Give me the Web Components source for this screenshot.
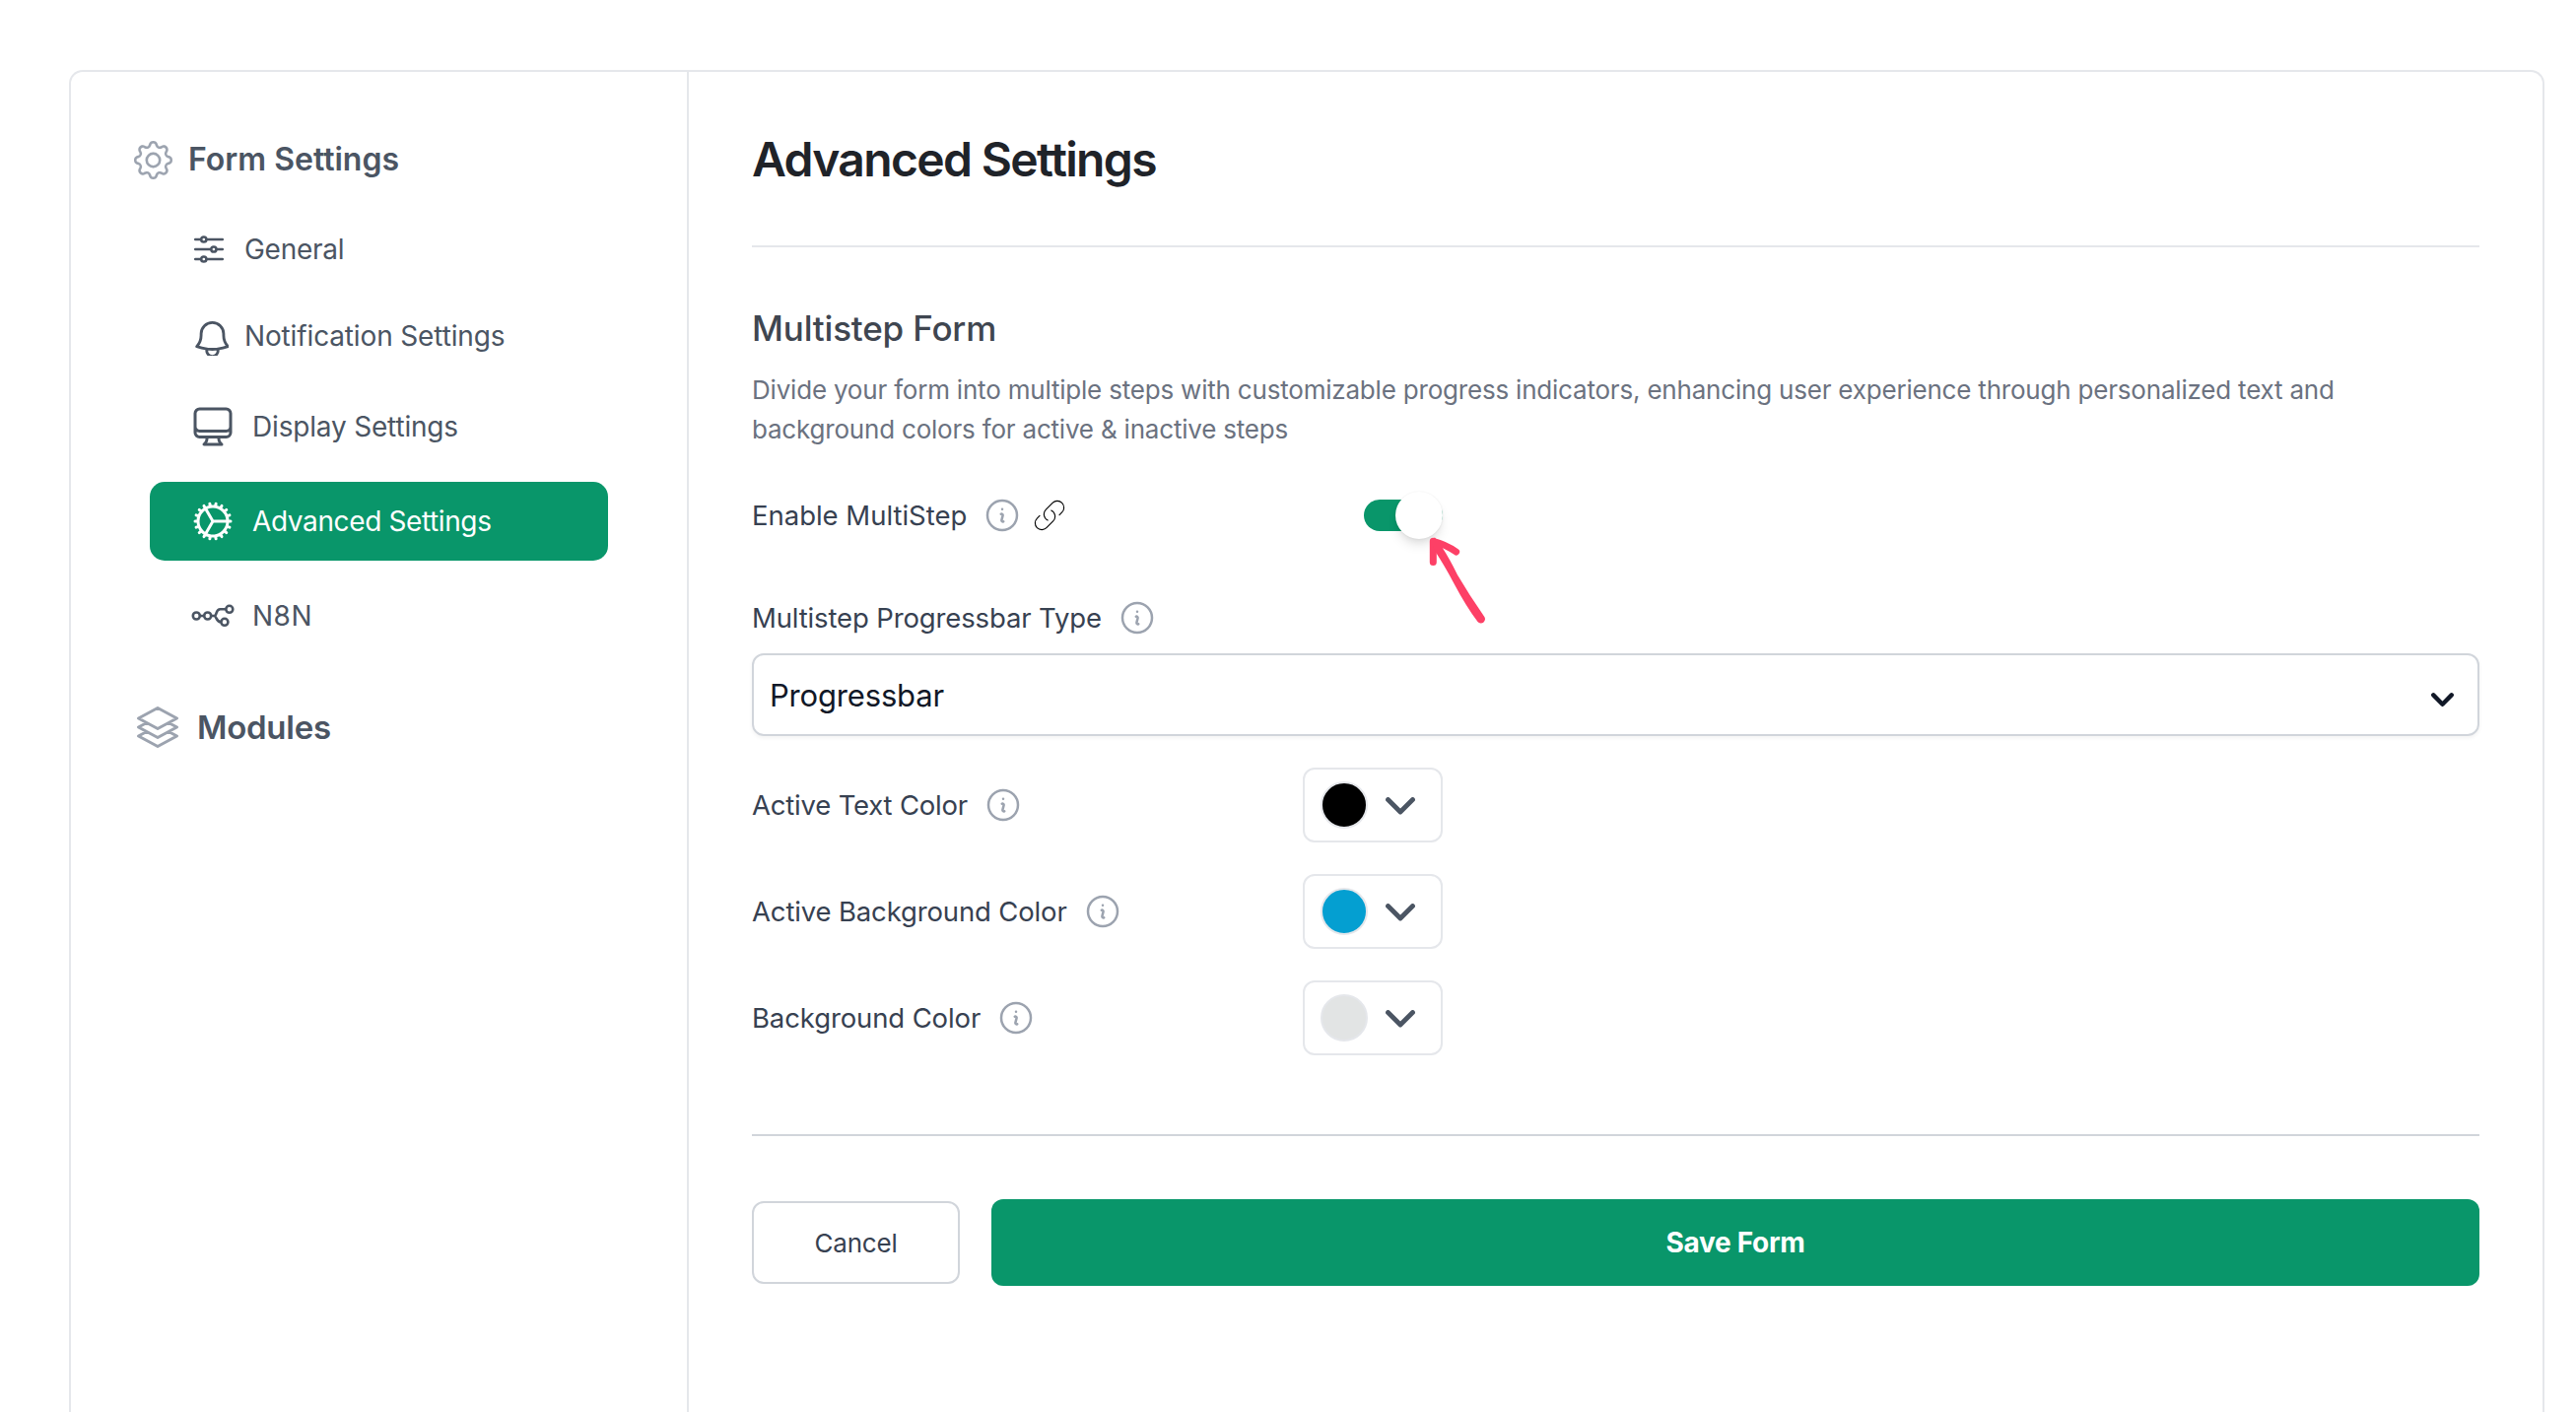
<!DOCTYPE html>
<html lang="en">
<head>
<meta charset="utf-8">
<title>Advanced Settings</title>
<style>
    html, body {
        margin: 0;
        height: 100%;
        overflow: hidden;
        background: #fff;
        font-family: Inter, "Liberation Sans", sans-serif;
        --green: #09966a;
        --line: #e5e7eb;
        --line-dark: #d1d5db;
    }
</style>
</head>
<body>
<settings-panel>
    <settings-sidebar slot="sidebar">
        <nav-heading icon="gear" style="--gap: 16px">Form Settings</nav-heading>
        <nav-list>
            <nav-item icon="sliders" compact style="letter-spacing: -0.28px">General</nav-item>
            <nav-item icon="bell" compact style="letter-spacing: -0.14px">Notification Settings</nav-item>
            <nav-item icon="desktop" style="letter-spacing: -0.18px">Display Settings</nav-item>
            <nav-item icon="cog" active style="letter-spacing: -0.38px">Advanced Settings</nav-item>
            <nav-item icon="nodes" style="letter-spacing: 0.5px">N8N</nav-item>
        </nav-list>
        <nav-heading icon="stack" style="--gap: 16px; font-size: 33px; letter-spacing: -0.25px">Modules</nav-heading>
    </settings-sidebar>

    <settings-section heading="Advanced Settings">
        <form-intro heading="Multistep Form">Divide your form into multiple steps with customizable progress indicators, enhancing user experience through personalized text and background colors for active &amp; inactive steps</form-intro>
        <form-row link style="--top: 43px; letter-spacing: -0.02px" label="Enable MultiStep"><toggle-switch></toggle-switch></form-row>
        <form-row style="--top: 56px; letter-spacing: -0.14px" label="Multistep Progressbar Type"></form-row>
        <select-box>Progressbar</select-box>
        <form-row style="--top: 32px; letter-spacing: -0.2px" label="Active Text Color"><color-picker color="#000000"></color-picker></form-row>
        <form-row style="--top: 32px; letter-spacing: -0.15px" label="Active Background Color"><color-picker color="#049fd1"></color-picker></form-row>
        <form-row style="--top: 32px; letter-spacing: -0.12px" label="Background Color"><color-picker color="#e2e4e4"></color-picker></form-row>
        <form-footer></form-footer>
    </settings-section>
</settings-panel>
<pointer-arrow></pointer-arrow>

<script>
(function () {
    const icons = {
        gear: `<svg width="39" height="39" viewBox="0 0 16 16" fill="currentColor" stroke="currentColor" stroke-width=".08"><path d="M8 4.754a3.246 3.246 0 1 0 0 6.492 3.246 3.246 0 0 0 0-6.492M5.754 8a2.246 2.246 0 1 1 4.492 0 2.246 2.246 0 0 1-4.492 0"/><path d="M9.796 1.343c-.527-1.79-3.065-1.79-3.592 0l-.094.319a.873.873 0 0 1-1.255.52l-.292-.16c-1.64-.892-3.433.902-2.54 2.541l.159.292a.873.873 0 0 1-.52 1.255l-.319.094c-1.79.527-1.79 3.065 0 3.592l.319.094a.873.873 0 0 1 .52 1.255l-.16.292c-.892 1.64.901 3.434 2.541 2.54l.292-.159a.873.873 0 0 1 1.255.52l.094.319c.527 1.79 3.065 1.79 3.592 0l.094-.319a.873.873 0 0 1 1.255-.52l.292.16c1.64.893 3.434-.902 2.54-2.541l-.159-.292a.873.873 0 0 1 .52-1.255l.319-.094c1.79-.527 1.79-3.065 0-3.592l-.319-.094a.873.873 0 0 1-.52-1.255l.16-.292c.893-1.64-.902-3.433-2.541-2.54l-.292.159a.873.873 0 0 1-1.255-.52zm-2.633.283c.246-.835 1.428-.835 1.674 0l.094.319a1.873 1.873 0 0 0 2.693 1.115l.291-.16c.764-.415 1.6.42 1.184 1.185l-.159.292a1.873 1.873 0 0 0 1.116 2.692l.318.094c.835.246.835 1.428 0 1.674l-.319.094a1.873 1.873 0 0 0-1.115 2.693l.16.291c.415.764-.42 1.6-1.185 1.184l-.291-.159a1.873 1.873 0 0 0-2.693 1.116l-.094.318c-.246.835-1.428.835-1.674 0l-.094-.319a1.873 1.873 0 0 0-2.692-1.115l-.292.16c-.764.415-1.6-.42-1.184-1.185l.159-.291A1.873 1.873 0 0 0 1.945 8.93l-.319-.094c-.835-.246-.835-1.428 0-1.674l.319-.094A1.873 1.873 0 0 0 3.06 4.377l-.16-.292c-.415-.764.42-1.6 1.185-1.184l.292.159a1.873 1.873 0 0 0 2.692-1.115z"/></svg>`,
        stack: `<svg width="48" height="48" viewBox="0 0 24 24" fill="none" stroke="currentColor" stroke-width="1.5" stroke-linecap="round" stroke-linejoin="round"><path d="M6.429 9.75L2.25 12l4.179 2.25m0-4.5l5.571 3 5.571-3m-11.142 0L2.25 7.5 12 2.25l9.75 5.25-4.179 2.25m0 0L21.75 12l-4.179 2.25m0 0l4.179 2.25L12 21.75 2.25 16.5l4.179-2.25m11.142 0l-5.571 3-5.571-3"/></svg>`,
        sliders: `<svg width="38" height="48" viewBox="0 0 38 48" fill="none" stroke="currentColor" stroke-width="2.5" stroke-linecap="round"><path d="M4.2 14H10M15.6 14H31.8M4.2 24H20M25.7 24H31.8M4.2 34H10M15.6 34H31.8"/><circle cx="12.8" cy="14" r="2.6"/><circle cx="22.9" cy="24" r="2.6"/><circle cx="12.8" cy="34" r="2.6"/></svg>`,
        bell: `<svg width="38" height="48" viewBox="0 0 38 48"><svg width="46" height="44"><path transform="translate(-1.3 4.7) scale(1.9)" fill="none" stroke="currentColor" stroke-width="1.5" stroke-linecap="round" stroke-linejoin="round" d="M14.857 17.082a23.848 23.848 0 005.454-1.31A8.967 8.967 0 0118 9.75v-.7V9A6 6 0 006 9v.75a8.967 8.967 0 01-2.312 6.022c1.733.64 3.56 1.085 5.455 1.31m5.714 0a24.255 24.255 0 01-5.714 0m5.714 0a3 3 0 11-5.714 0"/></svg></svg>`,
        desktop: `<svg width="46" height="48" viewBox="1 0 23 24" fill="none" stroke="currentColor" stroke-width="1.5" stroke-linecap="round" stroke-linejoin="round"><path d="M9 17.25v1.007a3 3 0 01-.879 2.122L7.5 21h9l-.621-.621A3 3 0 0115 18.257V17.25m6-12V15a2.25 2.25 0 01-2.25 2.25H5.25A2.25 2.25 0 013 15V5.25m18 0A2.25 2.25 0 0018.75 3H5.25A2.25 2.25 0 003 5.25m18 0V12a2.25 2.25 0 01-2.25 2.25H5.25A2.25 2.25 0 013 12V5.25"/></svg>`,
        cog: `<svg width="46" height="48" viewBox="1 0 23 24" fill="none" stroke="currentColor" stroke-width="1.5" stroke-linecap="round" stroke-linejoin="round"><path d="M4.5 12a7.5 7.5 0 0015 0m-15 0a7.5 7.5 0 1115 0m-15 0H3m16.5 0H21m-1.5 0H12m-8.457 3.077l1.41-.513m14.095-5.13l1.41-.513M5.106 17.785l1.15-.964m11.49-9.642l1.149-.964M7.501 19.795l.75-1.3m7.5-12.99l.75-1.3m-6.063 16.658l.26-1.477m2.605-14.772l.26-1.477m0 17.726l-.26-1.477M10.698 4.614l-.26-1.477M16.5 19.794l-.75-1.299M7.5 4.205L12 12m6.894 5.785l-1.149-.964M6.256 7.178l-1.15-.964m15.352 8.864l-1.41-.513M4.954 9.435l-1.41-.514M12.002 12l-3.75 6.495"/></svg>`,
        nodes: `<svg width="46" height="48" viewBox="0 0 46 48" fill="none" stroke="currentColor" stroke-width="2.6"><circle cx="5.3" cy="24" r="3.5"/><circle cx="16.7" cy="24" r="3.5"/><circle cx="38.8" cy="17.3" r="3.5"/><circle cx="33.9" cy="30.3" r="3.5"/><path d="M8.8 24H13.2M20.2 24H23.3C26.6 24 24.4 17.3 29.5 17.3H35.3M23.3 24C26 24 25 30.3 30.4 30.3"/></svg>`,
        info: `<svg width="40" height="40" viewBox="0 0 24 24" fill="none" stroke="#9ca3af" stroke-width="1.5" stroke-linecap="round" stroke-linejoin="round"><path d="M11.25 11.25l.041-.02a.75.75 0 011.063.852l-.708 2.836a.75.75 0 001.063.853l.041-.021M21 12a9 9 0 11-18 0 9 9 0 0118 0zm-9-3.75h.008v.008H12V8.25z"/></svg>`,
        link: `<svg width="36" height="36" viewBox="0 0 24 24" fill="none" stroke="#000" stroke-width=".75" stroke-linecap="round" stroke-linejoin="round"><path d="M13.19 8.688a4.5 4.5 0 011.242 7.244l-4.5 4.5a4.5 4.5 0 01-6.364-6.364l1.757-1.757m13.35-.622l1.757-1.757a4.5 4.5 0 00-6.364-6.364l-4.5 4.5a4.5 4.5 0 001.242 7.244"/></svg>`
    };

    // Registers an element whose shadow root is rendered once from its attributes.
    function define(name, render) {
        customElements.define(name, class extends HTMLElement {
            constructor() {
                super();
                this._shadowRoot = this.attachShadow({ mode: "open" });
            }
            connectedCallback() {
                this._shadowRoot.innerHTML = render(this);
            }
        });
    }

    define("settings-panel", () => `
    <style>
    :host { display: block; height: 100%; box-sizing: border-box; padding: 71px 32px 0 70px; }
    .panel { display: flex; height: 100%; box-sizing: border-box; border: 2px solid var(--line);
        border-bottom: 0; border-radius: 14px 14px 0 0; }
    </style>
    <div class="panel"><slot name="sidebar"></slot><slot></slot></div>
    `);

    define("settings-sidebar", () => `
    <style>
    :host { display: flex; flex-direction: column; flex: none; width: 627px; box-sizing: border-box;
        padding: 65px 80px 0 64px; border-right: 2px solid var(--line); color: #4b5563; }
    </style>
    <slot></slot>
    `);

    define("nav-heading", el => `
    <style>
    :host { display: flex; align-items: center; gap: var(--gap); height: 48px; font-size: 32px;
        line-height: 48px; font-weight: 630; }
    svg { display: block; color: #9ca3af; }
    </style>
    ${icons[el.getAttribute("icon")]}<span><slot></slot></span>
    `);

    define("nav-list", () => `
    <style>
    :host { display: flex; flex-direction: column; gap: 16px; margin: 31px 0 49px 16px; }
    </style>
    <slot></slot>
    `);

    define("nav-item", el => `
    <style>
    :host { display: flex; align-items: center; gap: 16px; height: 80px; box-sizing: border-box;
        padding-left: 42px; border-radius: 15px; font-size: 28px; line-height: 40px; }
    :host([compact]) { height: 72px; }
    :host([active]) { background: var(--green); color: #fff; }
    svg { display: block; }
    </style>
    ${icons[el.getAttribute("icon")]}<span><slot></slot></span>
    `);

    define("settings-section", el => `
    <style>
    :host { display: flex; flex-direction: column; flex: 1; padding: 61px 64px 0; }
    h1 { margin: 0; height: 56px; font-size: 48px; line-height: 56px; font-weight: 630;
        letter-spacing: -1.65px; color: #1f2329; }
    hr { width: 100%; height: 2px; margin: 59px 0 0; border: 0; background: var(--line); }
    </style>
    <h1>${el.getAttribute("heading")}</h1>
    <hr>
    <slot></slot>
    `);

    define("form-intro", el => `
    <style>
    :host { display: block; margin-top: 62px; }
    h2 { margin: 0; font-size: 35px; line-height: 40px; font-weight: 500; letter-spacing: -0.18px;
        color: #3f4650; }
    p { margin: 23px 0 0; max-width: 1680px; font-size: 26px; line-height: 40px;
        letter-spacing: -0.2px; color: #6b7280; }
    </style>
    <h2>${el.getAttribute("heading")}</h2>
    <p><slot></slot></p>
    `);

    define("form-row", el => `
    <style>
    :host { display: grid; grid-template-columns: 559px 142px; align-items: center; min-height: 48px;
        margin-top: var(--top); font-size: 27.5px; color: #374151; }
    .label { display: flex; align-items: center; line-height: 40px; }
    .label svg { margin-left: 16px; }
    .label svg + svg { margin-left: 10px; }
    .control { display: flex; justify-content: flex-end; }
    </style>
    <div class="label"><span>${el.getAttribute("label")}</span>${icons.info}${el.hasAttribute("link") ? icons.link : ""}</div>
    <div class="control"><slot></slot></div>
    `);

    define("toggle-switch", () => `
    <style>
    :host { display: flex; align-items: center; justify-content: flex-end; width: 80px; height: 32px;
        border-radius: 16px; background: var(--green); }
    .knob { flex: none; width: 48px; height: 48px; border-radius: 50%; background: #fff;
        box-shadow: 0 8px 12px -2px rgba(0, 0, 0, .1), 0 4px 8px -4px rgba(0, 0, 0, .1), 0 0 2px rgba(0, 0, 0, .08); }
    </style>
    <div class="knob"></div>
    `);

    define("select-box", () => `
    <style>
    :host { display: flex; align-items: center; justify-content: space-between; height: 84px;
        box-sizing: border-box; margin-top: 12px; padding: 0 24px 0 16px; border: 2px solid var(--line-dark);
        border-radius: 12px; box-shadow: 0 2px 4px rgba(0, 0, 0, .05); font-size: 31px;
        letter-spacing: -0.18px; color: #111827; }
    svg { margin-top: 10px; }
    </style>
    <span><slot></slot></span>
    <svg width="23" height="15" viewBox="0 0 23 15" fill="none" stroke="currentColor" stroke-width="4.4" stroke-linecap="round" stroke-linejoin="round"><path d="M2.3 2.4L11.5 11.8L20.7 2.4"/></svg>
    `);

    define("color-picker", el => `
    <style>
    :host { display: flex; align-items: center; gap: 18px; width: 142px; height: 76px;
        box-sizing: border-box; padding-left: 16px; border: 2px solid var(--line); border-radius: 12px; }
    .swatch { width: 48px; height: 48px; box-sizing: border-box; border: 2px solid var(--line);
        border-radius: 50%; background: ${el.getAttribute("color")}; }
    svg { margin-top: 2px; }
    </style>
    <div class="swatch"></div>
    <svg width="30" height="18" viewBox="0 0 30 18" fill="none" stroke="#4b5563" stroke-width="4.8" stroke-linecap="round" stroke-linejoin="round"><path d="M2.5 2.5L15 15L27.5 2.5"/></svg>
    `);

    define("form-footer", () => `
    <style>
    :host { display: flex; align-items: center; gap: 32px; margin-top: 80px; padding-top: 64px;
        border-top: 2px solid var(--line-dark); }
    button { box-sizing: border-box; padding: 0; border-radius: 12px; font-family: inherit; }
    .cancel { width: 211px; height: 84px; border: 2px solid var(--line-dark); background: #fff;
        font-size: 26px; letter-spacing: -0.19px; color: #374151; }
    .save { flex: 1; height: 88px; border: 0; background: var(--green); font-size: 28px;
        font-weight: 700; letter-spacing: -0.3px; color: #fff; }
    </style>
    <button class="cancel">Cancel</button>
    <button class="save">Save Form</button>
    `);

    // Hand-drawn pointer that lies over the form, with its tip at the switch.
    define("pointer-arrow", () => `
    <style>
    :host { position: absolute; left: 1445px; top: 540px; width: 70px; height: 100px; }
    </style>
    <svg width="70" height="100" viewBox="0 0 70 100" fill="none" stroke="#fd4066" stroke-width="7" stroke-linecap="round" stroke-linejoin="round"><path d="M9.3 30.4V9.3Q22 12.5 32.6 20"/><path fill="#fd4066" stroke="none" d="M6.5 7.5L11 5.6L17.5 14Q26 27 34 43.5Q46 64 61 85.5A4 4 0 0 1 54.5 91Q43 76 29.5 50.5Q22 36 11 19Z"/></svg>
    `);
})();
</script>
</body>
</html>
